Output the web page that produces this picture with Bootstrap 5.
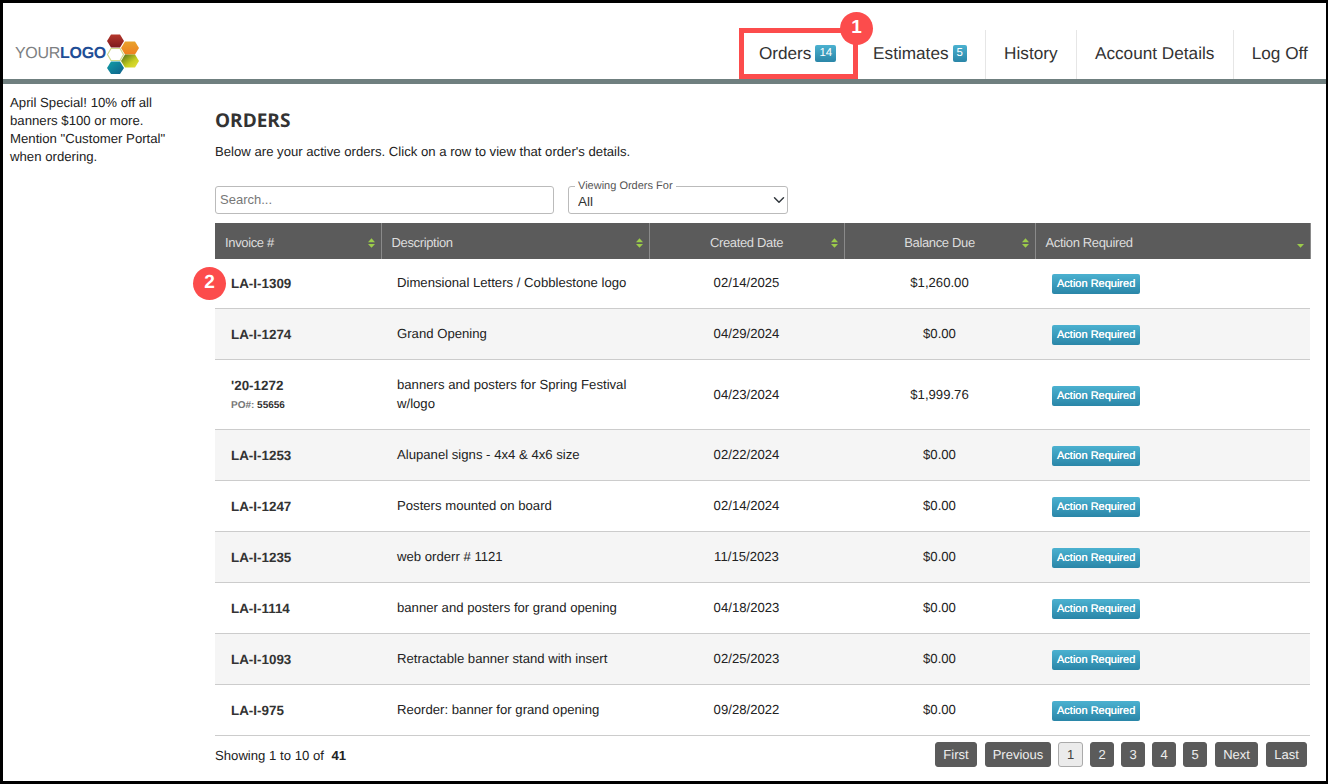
<!DOCTYPE html>
<html lang="en">
<head>
<meta charset="utf-8">
<title>Orders</title>
<link href="https://cdn.jsdelivr.net/npm/bootstrap@5.3.0/dist/css/bootstrap.min.css" rel="stylesheet">
<style>
html,body{height:100%}
body{font-family:"Liberation Sans",Arial,sans-serif;color:#222;background:#000;overflow:hidden;text-rendering:geometricPrecision}
.frame{position:relative;height:778px;margin:3px 2px 3px 3px;background:#fff;overflow:hidden}
.topbar{height:81px;border-bottom:5px solid #6f7f7f;padding-top:27px}
.brand{width:140px;height:49px;padding-left:12px;position:relative}
.brand-text{font-size:16px;line-height:1;letter-spacing:-.3px;margin-top:16px;color:#7d7f82;position:relative}
.brand-text b{color:#1f4e96}
.brand svg{position:absolute;left:99px;top:3px}
.topnav a{display:flex;align-items:center;height:49px;padding:0 18.200px 2px;font-size:17.200px;color:#333;text-decoration:none;border-left:1px solid #e6e6e6}
.topnav a.first{border-left:0;width:116px;padding-left:20px}
.topnav a.second{border-left:0;width:130px}
.count{background:linear-gradient(#4bb1d0,#2a86a8);color:#fff;font-weight:400;font-size:11.500px;border-radius:2px;padding:3px 4px;margin-left:4px;line-height:11px;margin-top:-1px}
.content-wrap{padding-top:10px}
.side{width:212px;flex:none;padding:0 30px 0 7px;font-size:13.200px;line-height:18px}
.main{width:1096px;flex:none}
.page-h{font-family:"Open Sans",sans-serif;font-weight:700;font-size:19px;line-height:24px;margin:14px 0 11px;color:#333}
.intro{font-size:13.150px;line-height:18px;margin:0 0 25px}
.search{width:339px;height:28px;padding:0 4px 2px;font-size:13px;border-color:#bbb;border-radius:3px;color:#333}
.search::placeholder{color:#777}
.filter{position:relative;width:220px;margin-left:14px}
.filter select{height:28px;font-size:13.500px;padding:4px 24px 0 9px;border-color:#bbb;border-radius:3px;line-height:16px;background-position:right 2px center;background-size:12px;color:#333}
.filter label{position:absolute;left:7px;top:-6px;background:#fff;padding:0 3px;font-size:11px;line-height:12px;color:#555}
.orders{width:1095px;table-layout:fixed;margin:9px 0 0;font-size:13.150px;--bs-table-bg:transparent}
.orders th{background:#5b5b5b;color:#ddd;font-weight:400;height:36px;padding:4px 10px 0;font-size:13px;border:0;border-right:1px solid #8a8a8a;position:relative;letter-spacing:-.35px;vertical-align:middle}
.orders th svg{position:absolute;right:6px;top:15px}
.orders td{border-bottom:1px solid #ccc;padding:2px 16px;height:51px;vertical-align:middle;color:#222;line-height:19px}
.orders tr.tall td{height:70px}
.orders tr.shade td{background:#f5f5f5}
.orders tr.r1 td{height:49px;padding-top:0}
.orders td.inv{font-weight:700;color:#333;font-size:13.400px;padding-bottom:0}
.orders td.act-cell{padding-bottom:0}
.orders tr.tall td.inv{padding-bottom:1px}
.po{display:block;font-size:10px;font-weight:700;color:#333;line-height:14px;margin-top:4px}
.po span{color:#777}
.act{display:inline-block;background:linear-gradient(#4bb1d0,#2a86a8);color:#fff;font-size:11px;line-height:14px;padding:3px 5px;border-radius:2px;font-weight:400;margin-left:1px;text-shadow:0 0 0 #fff}
.foot{font-size:13.150px;padding-top:6px}
.foot-note{padding-top:4px}
.foot b{margin-left:4px}
.pager{gap:7px}
.pg{background:#5b5b5b;color:#eee;border:1px solid #5b5b5b;font-size:13px;line-height:23px;height:25px;border-radius:3px;text-align:center}
.pg-first{width:42px;margin-right:1px}
.pg-prev{width:66px}
.pg-next{width:43px;margin-left:1px;margin-right:1px}
.pg-last{width:41px}
.pg.num{width:24px}
.pg.on{background:#ebebeb;color:#444;border-color:#aaa;width:25px}
.mark-box{position:absolute;left:736px;top:25px;width:119px;height:51px;border:5px solid #fc4c4c}
.dot{position:absolute;background:#fc4c4c;color:#fff;border-radius:50%;font-weight:700;font-size:19px;display:flex;align-items:center;justify-content:center}
.dot.d1{left:837px;top:9px;width:33px;height:33px}
.dot.d2{left:190px;top:264px;width:33px;height:33px}
</style>
</head>
<body>
<div class="frame">
  <header class="topbar d-flex justify-content-between">
    <div class="brand">
      <div class="brand-text">YOUR<b>LOGO</b></div>
      <svg width="42" height="42" viewBox="0 0 42 42">
        <defs>
          <linearGradient id="r" x1="0" y1="0" x2="0" y2="1"><stop offset="0" stop-color="#b5372b"/><stop offset="1" stop-color="#7d1a1f"/></linearGradient>
          <linearGradient id="o" x1="0" y1="0" x2="0" y2="1"><stop offset="0" stop-color="#e8a22b"/><stop offset="1" stop-color="#ef7f1f"/></linearGradient>
          <linearGradient id="y" x1="0" y1="0" x2="1" y2="1"><stop offset="0" stop-color="#4d6b1c"/><stop offset=".6" stop-color="#c8cf20"/><stop offset="1" stop-color="#e8e040"/></linearGradient>
          <linearGradient id="t" x1="0" y1="0" x2="1" y2="1"><stop offset="0" stop-color="#11a0a8"/><stop offset="1" stop-color="#0f5f8a"/></linearGradient>
        </defs>
        <path d="M5 8 9 1.500H18L22 8 18 14.500H9Z" fill="url(#r)"/>
        <path d="M19 15 23 8.500H33L37 15 33 21.500H23Z" fill="url(#o)"/>
        <path d="M19 28 23 21.500H33L37 28 33 34.500H23Z" fill="url(#y)"/>
        <path d="M5 35 9 28.500H18L22 35 18 41H9Z" fill="url(#t)"/>
        <path d="M5.500 21.500 9 15.500H18L21.500 21.500 18 27.500H9Z" fill="#fff" stroke="#cfd88a" stroke-width="1.200"/>
      </svg>
    </div>
    <nav class="topnav d-flex">
      <a class="first" href="#">Orders <span class="badge count">14</span></a>
      <a class="second" href="#">Estimates <span class="badge count">5</span></a>
      <a href="#">History</a>
      <a href="#">Account Details</a>
      <a href="#">Log Off</a>
    </nav>
  </header>
  <div class="content-wrap d-flex">
    <aside class="side">April Special! 10% off all banners $100 or more. Mention "Customer Portal" when ordering.</aside>
    <main class="main">
      <h1 class="page-h">ORDERS</h1>
      <p class="intro">Below are your active orders. Click on a row to view that order's details.</p>
      <div class="d-flex">
        <input class="form-control search" type="text" placeholder="Search...">
        <div class="filter">
          <label>Viewing Orders For</label>
          <select class="form-select"><option>All</option></select>
        </div>
      </div>
      <table class="table orders mb-0">
        <colgroup><col style="width:166px"><col style="width:268px"><col style="width:195px"><col style="width:191px"><col style="width:275px"></colgroup>
        <thead>
          <tr>
            <th>Invoice #<svg width="7" height="10" viewBox="0 0 8 11"><path d="M4 0 8 4.500H0ZM0 6.500H8L4 11Z" fill="#9ccc4a"/></svg></th>
            <th>Description<svg width="7" height="10" viewBox="0 0 8 11"><path d="M4 0 8 4.500H0ZM0 6.500H8L4 11Z" fill="#9ccc4a"/></svg></th>
            <th class="text-center">Created Date<svg width="7" height="10" viewBox="0 0 8 11"><path d="M4 0 8 4.500H0ZM0 6.500H8L4 11Z" fill="#9ccc4a"/></svg></th>
            <th class="text-center">Balance Due<svg width="7" height="10" viewBox="0 0 8 11"><path d="M4 0 8 4.500H0ZM0 6.500H8L4 11Z" fill="#9ccc4a"/></svg></th>
            <th>Action Required<svg width="7" height="10" viewBox="0 0 8 11"><path d="M0 6.500H8L4 11Z" fill="#9ccc4a"/></svg></th>
          </tr>
        </thead>
        <tbody>
          <tr class="r1"><td class="inv">LA-I-1309</td><td>Dimensional Letters / Cobblestone logo</td><td class="text-center">02/14/2025</td><td class="text-center">$1,260.00</td><td class="act-cell"><span class="act">Action Required</span></td></tr>
          <tr class="shade"><td class="inv">LA-I-1274</td><td>Grand Opening</td><td class="text-center">04/29/2024</td><td class="text-center">$0.00</td><td class="act-cell"><span class="act">Action Required</span></td></tr>
          <tr class="tall"><td class="inv">'20-1272<span class="po"><span>PO#:</span> 55656</span></td><td>banners and posters for Spring Festival w/logo</td><td class="text-center">04/23/2024</td><td class="text-center">$1,999.76</td><td class="act-cell"><span class="act">Action Required</span></td></tr>
          <tr class="shade"><td class="inv">LA-I-1253</td><td>Alupanel signs - 4x4 &amp; 4x6 size</td><td class="text-center">02/22/2024</td><td class="text-center">$0.00</td><td class="act-cell"><span class="act">Action Required</span></td></tr>
          <tr><td class="inv">LA-I-1247</td><td>Posters mounted on board</td><td class="text-center">02/14/2024</td><td class="text-center">$0.00</td><td class="act-cell"><span class="act">Action Required</span></td></tr>
          <tr class="shade"><td class="inv">LA-I-1235</td><td>web orderr # 1121</td><td class="text-center">11/15/2023</td><td class="text-center">$0.00</td><td class="act-cell"><span class="act">Action Required</span></td></tr>
          <tr><td class="inv">LA-I-1114</td><td>banner and posters for grand opening</td><td class="text-center">04/18/2023</td><td class="text-center">$0.00</td><td class="act-cell"><span class="act">Action Required</span></td></tr>
          <tr class="shade"><td class="inv">LA-I-1093</td><td>Retractable banner stand with insert</td><td class="text-center">02/25/2023</td><td class="text-center">$0.00</td><td class="act-cell"><span class="act">Action Required</span></td></tr>
          <tr><td class="inv">LA-I-975</td><td>Reorder: banner for grand opening</td><td class="text-center">09/28/2022</td><td class="text-center">$0.00</td><td class="act-cell"><span class="act">Action Required</span></td></tr>
        </tbody>
      </table>
      <div class="foot d-flex justify-content-between align-items-center">
        <div class="foot-note">Showing 1 to 10 of <b>41</b></div>
        <div class="d-flex pager pe-1">
          <span class="pg pg-first">First</span><span class="pg pg-prev">Previous</span>
          <span class="pg num on">1</span><span class="pg num">2</span><span class="pg num">3</span><span class="pg num">4</span><span class="pg num">5</span>
          <span class="pg pg-next">Next</span><span class="pg pg-last">Last</span>
        </div>
      </div>
    </main>
  </div>
  <div class="mark-box"></div>
  <div class="dot d1">1</div>
  <div class="dot d2">2</div>
</div>
<script src="https://cdn.jsdelivr.net/npm/bootstrap@5.3.0/dist/js/bootstrap.bundle.min.js"></script>
</body>
</html>
